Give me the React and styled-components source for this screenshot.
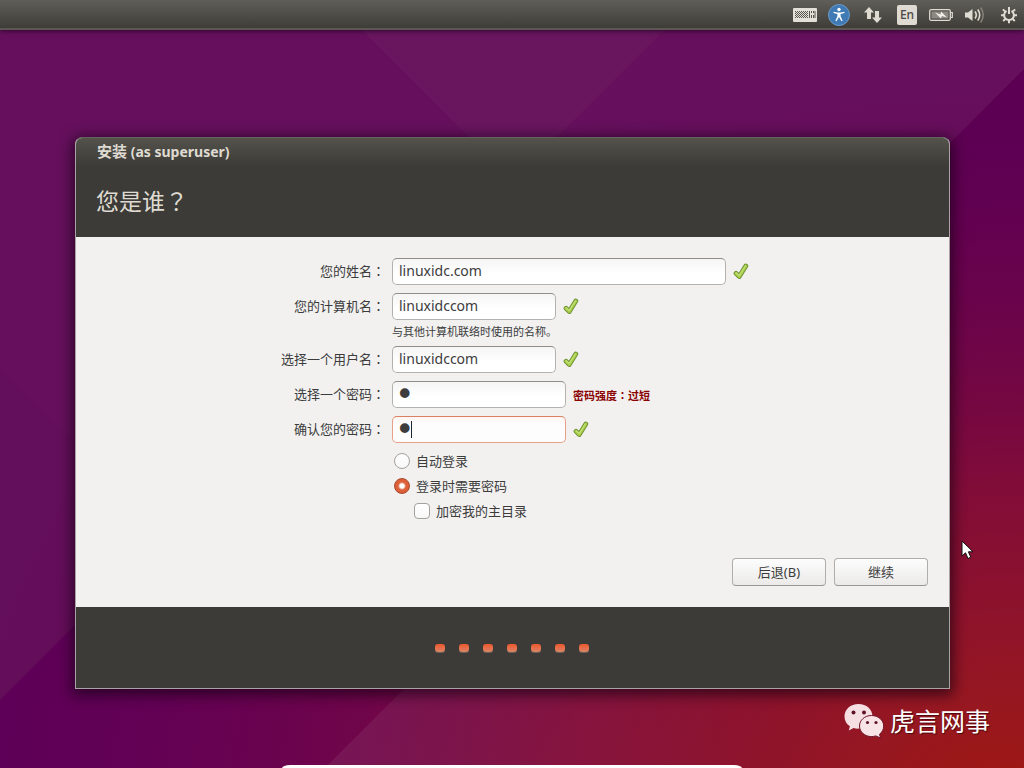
import React from "react";
import styled, { createGlobalStyle, css } from "styled-components";

const GlobalStyle = createGlobalStyle`
  *, *::before, *::after { box-sizing: border-box; }
  body {
    margin: 0;
    font-family: "Noto Sans", "Noto Sans CJK SC", sans-serif;
    font-size: 13px;
    color: #3c3c3c;
  }
`;

const Desktop = styled.div`
  position: relative;
  display: flex;
  flex-direction: column;
  min-height: 100vh;
  overflow: hidden;
`;

const Wallpaper = styled.svg`
  position: absolute;
  inset: 0;
  width: 100%;
  height: 100%;
  z-index: -1;
`;

const Panel = styled.header`
  display: flex;
  align-items: center;
  justify-content: flex-end;
  gap: 10px;
  height: 30px;
  padding: 2px 3px 0 0;
  background: linear-gradient(#5f5e58, #3e3d38);
  border-bottom: 2px solid #5c5655;
  box-shadow: 0 1px 5px rgba(20, 0, 20, 0.7);
`;

const Indicator = styled.span`
  display: flex;
  justify-content: center;
  width: 24px;
`;

const Language = styled.span`
  width: 20px;
  border-radius: 2px;
  background: #dfdbd2;
  color: #4a4944;
  font-size: 12px;
  font-weight: 500;
  line-height: 20px;
  text-align: center;
`;

const Window = styled.main`
  margin: 107px 74px 0 75px;
  border: 1px solid #aaa3a5;
  border-top-color: #65645e;
  border-radius: 7px 7px 0 0;
  background: #f2f1f0;
  box-shadow: 0 3px 14px 3px rgba(15, 0, 15, 0.65);
`;

const TitleBar = styled.div`
  height: 99px;
  padding: 3px 20px 0;
  border-radius: 6px 6px 0 0;
  background: linear-gradient(#53524b, #3c3b37 28px);
  color: #dfdbd2;
`;

const Title = styled.div`
  padding-left: 1px;
  font-size: 14px;
  font-weight: 700;
  line-height: 20px;
`;

const TitleName = styled.span`
  font-size: 15px;
`;

const Heading = styled.h1`
  margin: 20px 0 0;
  font-size: 23px;
  font-weight: 400;
  line-height: 36px;
`;

const Form = styled.form`
  padding: 21px;
`;

const Fields = styled.div`
  display: grid;
  grid-template-columns: minmax(max-content, 288fr) minmax(max-content, 536fr);
  gap: 8px 7px;
`;

const Label = styled.label`
  line-height: 26px;
  text-align: right;
`;

const Centered = styled.span`
  font-family: "Noto Sans CJK TC", sans-serif;
`;

const Line = styled.div`
  display: flex;
  align-items: center;
  gap: 7px;
`;

const inputWidths = { name: "334px", host: "164px", secret: "174px" };

const Input = styled.input`
  width: ${(p) => inputWidths[p.$size]};
  height: 27px;
  padding: 0 6px 2px;
  border: 1px solid #b4b2ae;
  border-top-color: #8f8e8b;
  border-radius: 5px;
  background: linear-gradient(#f5f5f5, #ffffff 60%);
  color: #3c3c3c;
  font-family: inherit;
  font-size: 14px;
  outline: none;
  &[type="password"] {
    padding: 0 2px;
    font-family: "DejaVu Sans", sans-serif;
    font-size: 33px;
  }
  ${(p) =>
    p.$active &&
    css`
      border-color: #e9a088;
      border-top-color: #dd7f61;
      background: linear-gradient(#fdf6f3, #fdfdfd 30%);
      caret-color: transparent;
    `}
`;

const InputBox = styled.span`
  position: relative;
  display: flex;
`;

const Caret = styled.span`
  position: absolute;
  top: 5px;
  left: 19px;
  width: 1px;
  height: 17px;
  background: #1c2430;
`;

const Hint = styled.div`
  margin-top: 5px;
  font-size: 11px;
  line-height: 13px;
`;

const Warning = styled.strong`
  color: #8b0000;
  font-size: 11px;
`;

const Options = styled.div`
  grid-column: 2;
  display: flex;
  flex-direction: column;
  gap: 5px;
`;

const Option = styled.label`
  display: flex;
  align-items: center;
  gap: 6px;
  height: 20px;
  padding-left: ${(p) => (p.$nested ? "22px" : "2px")};
`;

const OptionText = styled.span`
  padding-bottom: 2px;
`;

const Toggle = styled.input`
  appearance: none;
  width: 16px;
  height: 16px;
  margin: 0;
  border: 1px solid #a3a19d;
  border-radius: ${(p) => (p.type === "radio" ? "50%" : "4px")};
  background: linear-gradient(#ffffff, #f8f8f8);
  &[type="radio"]:checked {
    border-color: #a9482a;
    background: radial-gradient(circle, #ffffff 2px, #dc5f38 4px);
  }
`;

const Actions = styled.div`
  display: flex;
  justify-content: flex-end;
  gap: 8px;
  margin-top: 37px;
`;

const Button = styled.button`
  width: 94px;
  height: 28px;
  padding: 0 0 2px;
  border: 1px solid #b0aeaa;
  border-bottom-color: #999793;
  border-radius: 4px;
  background: linear-gradient(#fdfdfd, #ebeae9);
  color: #3c3c3c;
  font-family: inherit;
  font-size: 13px;
`;

const Footer = styled.div`
  display: flex;
  align-items: center;
  justify-content: center;
  gap: 14px;
  height: 81px;
  padding-right: 2px;
  background: #3c3b37;
`;

const Dot = styled.span`
  width: 10px;
  height: 8px;
  border-radius: 3px;
  background: linear-gradient(#f0582c, #d98566);
  box-shadow: 0 1px 0 #6a625a;
`;

const Watermark = styled.div`
  position: absolute;
  right: 34px;
  bottom: 28px;
  display: flex;
  align-items: center;
  gap: 6px;
  color: #ffffff;
  font-size: 25px;
  line-height: 38px;
  text-shadow: 1px 1px 1px rgba(40, 0, 10, 0.7);
`;

const Pointer = styled.svg`
  position: absolute;
  top: 540px;
  right: 50px;
`;

const Sheet = styled.div`
  align-self: center;
  width: 45%;
  height: 3px;
  margin-top: auto;
  border-radius: 8px 8px 0 0 / 3px 3px 0 0;
  background: #ffffff;
`;

function Background() {
  return (
    <Wallpaper viewBox="0 0 1024 768" preserveAspectRatio="none" aria-hidden="true">
      <defs>
        <radialGradient
          id="glow"
          gradientUnits="userSpaceOnUse"
          cx="0"
          cy="0"
          r="1"
          gradientTransform="translate(1010 800) scale(1060 740)"
        >
          <stop offset="0" stopColor="#a0180f" />
          <stop offset="0.14" stopColor="#981820" stopOpacity="0.98" />
          <stop offset="0.42" stopColor="#8c1030" stopOpacity="0.78" />
          <stop offset="0.75" stopColor="#72044a" stopOpacity="0.45" />
          <stop offset="1" stopColor="#60005a" stopOpacity="0" />
        </radialGradient>
      </defs>
      <rect width="1024" height="768" fill="#66105d" />
      <path d="M361 29H665L513 181Z" fill="#69165f" />
      <path d="M0 367L200 567L0 767Z" fill="#640f5b" />
      <path d="M1024 69V768H325Z" fill="#5b0053" />
      <path d="M0 700L200 500V768H0Z" fill="#5e0057" />
      <path d="M200 560H533L325 768H200Z" fill="#5e0057" />
      <rect width="1024" height="768" fill="url(#glow)" />
      <path d="M325 768L533 560H850L800 768Z" fill="#ffffff" fillOpacity="0" />
      <path d="M325 768L533 560H780V768Z" fill="url(#facet)" />
      <defs>
        <linearGradient id="facet">
          <stop offset="0" stopColor="#ffffff" stopOpacity="0.07" />
          <stop offset="1" stopColor="#ffffff" stopOpacity="0" />
        </linearGradient>
      </defs>
    </Wallpaper>
  );
}

function KeyboardIcon() {
  return (
    <svg width="24" height="14" viewBox="0 0 24 14">
      <rect width="24" height="14" rx="1" fill="#e2dfd8" />
      <path d="M2 3.5H15M2 5.5H15M2 7.5H15M2 9.5H15" stroke="#55544e" strokeWidth="1" strokeDasharray="1 1" />
      <path d="M3 4.5H15M3 6.5H15M3 8.5H15" stroke="#55544e" strokeWidth="1" strokeDasharray="1 1" />
      <path d="M16.5 3V10M18.5 3V5M18.5 7V10M20.5 3V5M20.5 7V10M22 3V10" stroke="#55544e" strokeWidth="1" />
    </svg>
  );
}

function AccessIcon() {
  return (
    <svg width="22" height="22" viewBox="0 0 22 22">
      <circle cx="11" cy="11" r="10.5" fill="#3f7ab5" stroke="#6a9ccd" />
      <circle cx="11" cy="5.5" r="1.7" fill="#fff" />
      <path d="M5.5 7.8L9.5 8.4H12.5L16.5 7.8V9L12.6 9.9V12.2L14.6 16.8L13.5 17.3L11 13L8.5 17.3L7.4 16.8L9.4 12.2V9.9L5.500 9Z" fill="#fff" />
    </svg>
  );
}

function NetworkIcon() {
  return (
    <svg width="18" height="18" viewBox="0 0 18 18" fill="#dfdbd2">
      <path d="M5 1L10 6.5H7V13H3V6.5H0Z" />
      <path d="M13 17L18 11.5H15V5H11V11.5H8Z" />
    </svg>
  );
}

function BatteryIcon() {
  return (
    <svg width="24" height="14" viewBox="0 0 24 14">
      <rect x="0.7" y="1.7" width="20.6" height="10.6" rx="1.5" fill="none" stroke="#dfdbd2" strokeWidth="1.3" />
      <rect x="2.500" y="3.500" width="17" height="7" fill="#8b8983" />
      <path d="M22 4.500H23.300V9.500H22" fill="none" stroke="#dfdbd2" strokeWidth="1.200" />
      <path d="M6 4.500L11.500 6.500L12 3.500L18 9.500L12.800 8L12 10.500Z" fill="#f2efe8" />
    </svg>
  );
}

function VolumeIcon() {
  return (
    <svg width="22" height="18" viewBox="0 0 22 18">
      <path d="M1 6.500H4L8.500 3V15L4 11.500H1Z" fill="#dfdbd2" />
      <path d="M11 5.500Q13.600 9 11 12.500M13.800 3.500Q17.600 9 13.800 14.500" fill="none" stroke="#dfdbd2" strokeWidth="1.600" />
      <path d="M16.600 1.500Q21.800 9 16.600 16.500" fill="none" stroke="#85827b" strokeWidth="1.500" />
    </svg>
  );
}

function GearIcon() {
  return (
    <svg width="18" height="18" viewBox="0 0 18 18" fill="none" stroke="#dfdbd2">
      <path d="M6.500 4.900A4.900 4.900 0 1 0 11.500 4.900" strokeWidth="2" />
      <path d="M9 1V8" strokeWidth="2" />
      <path d="M4.900 5.400L2.900 3.400M13.100 5.400L15.100 3.400M4.500 9.200H1M13.500 9.200H17M5.600 12.600L3.200 15M12.400 12.600L14.800 15M9 14V17.300" strokeWidth="2" />
    </svg>
  );
}

function CheckIcon() {
  return (
    <svg width="16" height="18" viewBox="0 0 16 18" role="img" aria-label="OK" fill="none" strokeLinecap="round" strokeLinejoin="round">
      <path d="M3 10.300L6.300 13.500L12.800 3" stroke="#6f9136" strokeWidth="4.800" />
      <path d="M3 10.300L6.300 13.500L12.800 3" stroke="#a5cc45" strokeWidth="3" />
      <path d="M3 9.800L6.200 12.600L12.400 3" stroke="#c5e07c" strokeWidth="1.200" />
    </svg>
  );
}

function ChatLogo() {
  return (
    <svg width="40" height="36" viewBox="0 0 40 36">
      <path d="M14.5 1C6.500 1 0.500 6.500 0.500 13.400C0.500 17.600 2.600 21 5.900 23.300L4.800 27.400L9.600 25C11.200 25.500 13 25.700 14.900 25.600C22.600 25.300 28.500 20 28.500 13.400C28.500 6.500 22.500 1 14.500 1Z" fill="#f6dfe3" />
      <path d="M27.500 12.500C20.800 12.500 15.500 17.200 15.500 23C15.500 28.900 20.800 33.600 27.500 33.600C29 33.600 30.500 33.300 31.800 32.900L36.600 35L35.500 31.300C38.100 29.300 39.700 26.300 39.700 23C39.700 17.200 34.200 12.500 27.500 12.500Z" fill="#f8e3e6" stroke="#6e1428" strokeWidth="1" />
      <g fill="#5e1426">
        <circle cx="9.500" cy="9.500" r="2" />
        <circle cx="20" cy="9.500" r="2" />
        <circle cx="23.500" cy="19.500" r="1.600" />
        <circle cx="32" cy="19.500" r="1.600" />
      </g>
    </svg>
  );
}

function Field({ id, label, size, type = "text", value, active, hint, warning }) {
  return (
    <>
      <Label htmlFor={id}>
        {label}
        <Centered>：</Centered>
      </Label>
      <div>
        <Line>
          <InputBox>
            <Input id={id} type={type} defaultValue={value} $size={size} $active={active} autoComplete="off" spellCheck={false} />
            {active && <Caret />}
          </InputBox>
          {warning ? <Warning>{warning}</Warning> : <CheckIcon />}
        </Line>
        {hint && <Hint>{hint}</Hint>}
      </div>
    </>
  );
}

export default function App() {
  return (
    <Desktop>
      <GlobalStyle />
      <Background />
      <Panel>
        <Indicator><KeyboardIcon /></Indicator>
        <Indicator><AccessIcon /></Indicator>
        <Indicator><NetworkIcon /></Indicator>
        <Indicator><Language>En</Language></Indicator>
        <Indicator><BatteryIcon /></Indicator>
        <Indicator><VolumeIcon /></Indicator>
        <Indicator><GearIcon /></Indicator>
      </Panel>
      <Window>
        <TitleBar>
          <Title><TitleName>安装</TitleName> (as superuser)</Title>
          <Heading>您是谁<Centered>？</Centered></Heading>
        </TitleBar>
        <Form onSubmit={(e) => e.preventDefault()}>
          <Fields>
            <Field id="fullname" label="您的姓名" size="name" value="linuxidc.com" />
            <Field id="hostname" label="您的计算机名" size="host" value="linuxidccom" hint="与其他计算机联络时使用的名称。" />
            <Field id="username" label="选择一个用户名" size="host" value="linuxidccom" />
            <Field
              id="password"
              label="选择一个密码"
              size="secret"
              type="password"
              value="1"
              warning={<>密码强度<Centered>：</Centered>过短</>}
            />
            <Field id="confirm" label="确认您的密码" size="secret" type="password" value="1" active />
            <Options>
              <Option><Toggle type="radio" name="login" /><OptionText>自动登录</OptionText></Option>
              <Option><Toggle type="radio" name="login" defaultChecked /><OptionText>登录时需要密码</OptionText></Option>
              <Option $nested><Toggle type="checkbox" /><OptionText>加密我的主目录</OptionText></Option>
            </Options>
          </Fields>
          <Actions>
            <Button type="button">后退(B)</Button>
            <Button type="submit">继续</Button>
          </Actions>
        </Form>
        <Footer>
          {Array.from({ length: 7 }, (_, i) => <Dot key={i} />)}
        </Footer>
      </Window>
      <Sheet />
      <Watermark>
        <ChatLogo />
        虎言网事
      </Watermark>
      <Pointer width="13" height="20" viewBox="0 0 13 20" aria-hidden="true">
        <path d="M1 1V16L4.500 12.800L7 18.500L9.800 17.200L7.400 11.800H12Z" fill="#fff" stroke="#111" strokeWidth="1" />
      </Pointer>
    </Desktop>
  );
}
